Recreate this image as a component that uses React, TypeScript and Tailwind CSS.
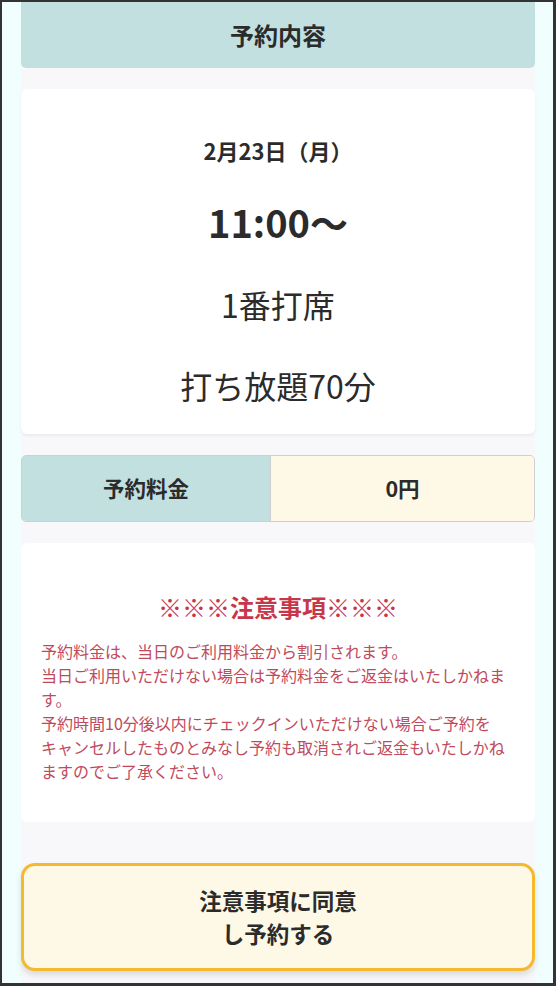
import React from "react";

const font = { fontFamily: '"Noto Sans CJK JP", "Noto Sans", sans-serif' };

export default function App() {
  return (
    <div
      lang="ja"
      className="w-[556px] h-[986px] overflow-hidden border-[#333333] border-t-2 border-l-2 border-r-[3px] border-b-[3px] bg-[#f0fefe] pl-[19px] pr-[18px]"
      style={font}
    >
      <div className="h-full bg-[#f8f8fb] flex flex-col text-[#2b2b2b]">
        {/* Header */}
        <div className="h-[66px] shrink-0 bg-[#c3e0e0] rounded-b-[5px] flex items-center justify-center">
          <span className="text-[24px] font-bold leading-none">予約内容</span>
        </div>

        {/* Reservation card */}
        <div className="mt-[21px] bg-white rounded-[6px] shadow-[0_2px_3px_rgba(0,0,0,0.06)] flex flex-col items-center pt-[46px] pb-[27px]">
          <div className="text-[22px] font-bold leading-[30px]">2月23日（月）</div>
          <div className="mt-[33px] text-[38px] font-bold leading-[48px]">11:00〜</div>
          <div className="mt-[36px] text-[32px] leading-[44px]">1番打席</div>
          <div className="mt-[37px] text-[32px] leading-[44px]">打ち放題70分</div>
        </div>

        {/* Price */}
        <div className="mt-[21px] h-[67px] shrink-0 flex rounded-[5px] border border-[#cfcfcf] overflow-hidden">
          <div className="w-[249px] bg-[#c3e0e0] border-r border-[#cfcfcf] flex items-center justify-center">
            <span className="text-[21.5px] font-bold">予約料金</span>
          </div>
          <div className="flex-1 bg-[#fef8e6] flex items-center justify-center">
            <span className="text-[21.5px] font-bold">0円</span>
          </div>
        </div>

        {/* Notice */}
        <div className="mt-[21px] bg-white rounded-[6px] pt-[48px] pb-[39px] px-[20px]">
          <div className="text-center text-[24px] font-bold leading-[32px] text-[#c8364a]">
            ※※※注意事項※※※
          </div>
          <p className="mt-[16px] text-[16px] leading-[24px] text-[#c04a5c] [line-break:strict]">
            予約料金は、当日のご利用料金から割引されます。
            <br />
            当日ご利用いただけない場合は予約料金をご返金はいたしかねます。
            <br />
            予約時間10分後以内にチェックインいただけない場合ご予約をキャンセルしたものとみなし予約も取消されご返金もいたしかねますのでご了承ください。
          </p>
        </div>

        {/* Button */}
        <button className="mt-[41px] h-[108px] shrink-0 rounded-[14px] border-[3px] border-[#f5b82e] bg-[#fef8e6] shadow-[0_4px_6px_rgba(0,0,0,0.12)] flex flex-col items-center justify-center text-[22.5px] font-bold leading-[33px] text-[#2b2b2b]">
          <span>注意事項に同意</span>
          <span>し予約する</span>
        </button>
      </div>
    </div>
  );
}
